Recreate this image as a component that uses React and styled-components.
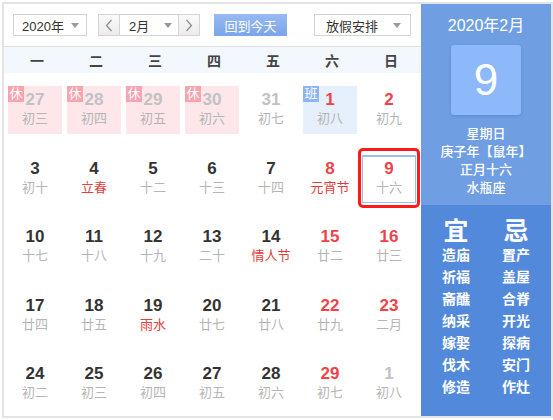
import React from 'react';
import styled, { createGlobalStyle } from 'styled-components';

const Global = createGlobalStyle`
  html, body { margin: 0; padding: 0; background: #fff; }
  body { font-family: "Liberation Sans", "Noto Sans CJK SC", sans-serif; color: #333; }
`;

const Frame = styled.div`
  margin: 2px 0 0 2px;
  width: 551px;
  height: 416px;
  box-sizing: border-box;
  border: 2px solid #e3e3e3;
  display: flex;
`;

const Main = styled.div`
  width: 417px;
  display: flex;
  flex-direction: column;
`;

const Header = styled.div`
  height: 43px;
  box-sizing: border-box;
  border-bottom: 1px solid #e0e0e0;
  display: flex;
  align-items: flex-start;
  padding: 10px 0 0 9px;
`;

const Select = styled.div`
  width: ${p => p.$w}px;
  height: 22px;
  margin-left: ${p => p.$ml || 0}px;
  box-sizing: border-box;
  border: 1px solid #d4d4d4;
  background: #fff;
  display: flex;
  align-items: center;
  justify-content: space-between;
  padding: 0 ${p => p.$pr || 7}px 0 ${p => p.$pl || 8}px;
  font-size: 13px;
  color: #333;
  ${p => p.$joined && 'border-left: none; border-right: none;'}
`;

const Caret = styled.span`
  width: 0;
  height: 0;
  border-left: 4px solid transparent;
  border-right: 4px solid transparent;
  border-top: 5px solid #9a9a9a;
`;

const Group = styled.div`
  display: flex;
  margin-left: 11px;
`;

const ArrowBtn = styled.div`
  width: 22px;
  height: 22px;
  box-sizing: border-box;
  border: 1px solid #d4d4d4;
  background: linear-gradient(#fafafa, #ececec);
  display: flex;
  align-items: center;
  justify-content: center;
`;

const TodayBtn = styled.div`
  width: 73px;
  height: 22px;
  margin-left: 14px;
  box-sizing: border-box;
  background: linear-gradient(#97baf2, #7ba4ea);
  color: #fff;
  font-size: 13px;
  display: flex;
  align-items: center;
  justify-content: center;
`;

const WeekRow = styled.div`
  height: 26px;
  background: #f3f7fe;
  display: grid;
  grid-template-columns: repeat(7, 54px);
  column-gap: 5px;
  padding-left: 6px;
  align-items: center;
`;

const WeekLabel = styled.div`
  text-align: center;
  font-size: 14px;
  font-weight: 700;
  color: #444;
`;

const Body = styled.div`
  display: grid;
  grid-template-columns: repeat(7, 54px);
  grid-auto-rows: 48px;
  column-gap: 5px;
  row-gap: 20.5px;
  padding: 13px 0 0 4px;
`;

const bgMap = { rest: '#fde7eb', work: '#e6effc', today: '#fff', none: 'transparent' };

const Cell = styled.div`
  position: relative;
  box-sizing: border-box;
  background: ${p => bgMap[p.$kind]};
  display: flex;
  flex-direction: column;
  align-items: center;
  padding-top: ${p => (p.$kind === 'today' ? 2 : 4)}px;
  ${p => p.$kind === 'today' && `
    border: 1px solid #9dbdf0;
    border-top: 2px solid #9dbdf0;
  `}
`;

const numColor = { normal: '#333', red: '#ef4349', gray: '#c2c2c2' };

const Num = styled.div`
  font-size: 17px;
  font-weight: 700;
  line-height: 20px;
  color: ${p => numColor[p.$tone]};
`;

const Lunar = styled.div`
  font-size: 13px;
  line-height: 18px;
  color: ${p => (p.$red ? '#e23c3c' : '#b5b5b5')};
`;

const Badge = styled.div`
  position: absolute;
  top: 0;
  left: 0;
  width: 16px;
  height: 16px;
  font-size: 13px;
  line-height: 16px;
  text-align: center;
  color: #fff;
  background: ${p => (p.$work ? '#8db5f2' : '#f8a3b0')};
`;

const Marker = styled.div`
  position: absolute;
  top: -9px;
  left: -5px;
  right: -5px;
  bottom: -6px;
  border: 3px solid #ff1a1a;
  border-radius: 5px;
  z-index: 2;
`;

const Side = styled.div`
  width: 130px;
  display: flex;
  flex-direction: column;
`;

const SideTop = styled.div`
  height: 201px;
  background: #6f9ee2;
  color: #fff;
  display: flex;
  flex-direction: column;
  align-items: center;
  padding-top: 12px;
  box-sizing: border-box;
`;

const MonthTitle = styled.div`
  font-size: 16px;
  line-height: 20px;
`;

const DayBox = styled.div`
  width: 70px;
  height: 70px;
  margin-top: 9px;
  margin-bottom: 10px;
  border-radius: 3px;
  background: #8db9fa;
  box-shadow: 0 1px 3px rgba(40, 80, 160, 0.25);
  display: flex;
  align-items: center;
  justify-content: center;
  font-size: 44px;
  line-height: 1;
  color: #fff;
`;

const InfoLine = styled.div`
  font-size: 13px;
  line-height: 18px;
  font-weight: 500;
`;

const SideBottom = styled.div`
  flex: 1;
  background: #5389db;
  color: #fff;
  display: grid;
  grid-template-columns: 60px 60px;
  justify-content: center;
  align-content: start;
  padding-top: 13px;
`;

const Col = styled.div`
  display: flex;
  flex-direction: column;
  align-items: center;
`;

const YiJi = styled.div`
  font-size: 25px;
  line-height: 26px;
  font-weight: 700;
`;

const Item = styled.div`
  font-size: 14px;
  line-height: 22px;
  font-weight: 700;
`;

const Chevron = ({ dir }) => (
  <svg width="8" height="13" viewBox="0 0 8 13">
    <path
      d={dir === 'left' ? 'M6.5 1 L1.5 6.5 L6.5 12' : 'M1.5 1 L6.5 6.5 L1.5 12'}
      fill="none"
      stroke="#8a8a8a"
      strokeWidth="1.2"
    />
  </svg>
);

const weekdays = ['一', '二', '三', '四', '五', '六', '日'];

// [num, lunar, numTone, lunarRed, kind, badge]
const days = [
  ['27', '初三', 'gray', false, 'rest', '休'],
  ['28', '初四', 'gray', false, 'rest', '休'],
  ['29', '初五', 'gray', false, 'rest', '休'],
  ['30', '初六', 'gray', false, 'rest', '休'],
  ['31', '初七', 'gray', false, 'none'],
  ['1', '初八', 'red', false, 'work', '班'],
  ['2', '初九', 'red', false, 'none'],
  ['3', '初十', 'normal', false, 'none'],
  ['4', '立春', 'normal', true, 'none'],
  ['5', '十二', 'normal', false, 'none'],
  ['6', '十三', 'normal', false, 'none'],
  ['7', '十四', 'normal', false, 'none'],
  ['8', '元宵节', 'red', true, 'none'],
  ['9', '十六', 'red', false, 'today'],
  ['10', '十七', 'normal', false, 'none'],
  ['11', '十八', 'normal', false, 'none'],
  ['12', '十九', 'normal', false, 'none'],
  ['13', '二十', 'normal', false, 'none'],
  ['14', '情人节', 'normal', true, 'none'],
  ['15', '廿二', 'red', false, 'none'],
  ['16', '廿三', 'red', false, 'none'],
  ['17', '廿四', 'normal', false, 'none'],
  ['18', '廿五', 'normal', false, 'none'],
  ['19', '雨水', 'normal', true, 'none'],
  ['20', '廿七', 'normal', false, 'none'],
  ['21', '廿八', 'normal', false, 'none'],
  ['22', '廿九', 'red', false, 'none'],
  ['23', '二月', 'red', false, 'none'],
  ['24', '初二', 'normal', false, 'none'],
  ['25', '初三', 'normal', false, 'none'],
  ['26', '初四', 'normal', false, 'none'],
  ['27', '初五', 'normal', false, 'none'],
  ['28', '初六', 'normal', false, 'none'],
  ['29', '初七', 'red', false, 'none'],
  ['1', '初八', 'gray', false, 'none'],
];

const yi = ['造庙', '祈福', '斋醮', '纳采', '嫁娶', '伐木', '修造'];
const ji = ['置产', '盖屋', '合脊', '开光', '探病', '安门', '作灶'];

export default function App() {
  return (
    <>
      <Global />
      <Frame>
        <Main>
          <Header>
            <Select $w={74}>
              <span>2020年</span>
              <Caret />
            </Select>
            <Group>
              <ArrowBtn><Chevron dir="left" /></ArrowBtn>
              <Select $w={58} $joined $pl={9} $pr={6}>
                <span>2月</span>
                <Caret />
              </Select>
              <ArrowBtn><Chevron dir="right" /></ArrowBtn>
            </Group>
            <TodayBtn>回到今天</TodayBtn>
            <Select $w={97} $ml={27} $pl={11} $pr={9}>
              <span>放假安排</span>
              <Caret />
            </Select>
          </Header>
          <WeekRow>
            {weekdays.map(w => <WeekLabel key={w}>{w}</WeekLabel>)}
          </WeekRow>
          <Body>
            {days.map(([n, l, tone, red, kind, badge], i) => (
              <Cell key={i} $kind={kind}>
                {badge && <Badge $work={kind === 'work'}>{badge}</Badge>}
                {kind === 'today' && <Marker />}
                <Num $tone={tone}>{n}</Num>
                <Lunar $red={red}>{l}</Lunar>
              </Cell>
            ))}
          </Body>
        </Main>
        <Side>
          <SideTop>
            <MonthTitle>2020年2月</MonthTitle>
            <DayBox>9</DayBox>
            <InfoLine>星期日</InfoLine>
            <InfoLine>庚子年【鼠年】</InfoLine>
            <InfoLine>正月十六</InfoLine>
            <InfoLine>水瓶座</InfoLine>
          </SideTop>
          <SideBottom>
            <Col>
              <YiJi>宜</YiJi>
              {yi.map(t => <Item key={t}>{t}</Item>)}
            </Col>
            <Col>
              <YiJi>忌</YiJi>
              {ji.map(t => <Item key={t}>{t}</Item>)}
            </Col>
          </SideBottom>
        </Side>
      </Frame>
    </>
  );
}
